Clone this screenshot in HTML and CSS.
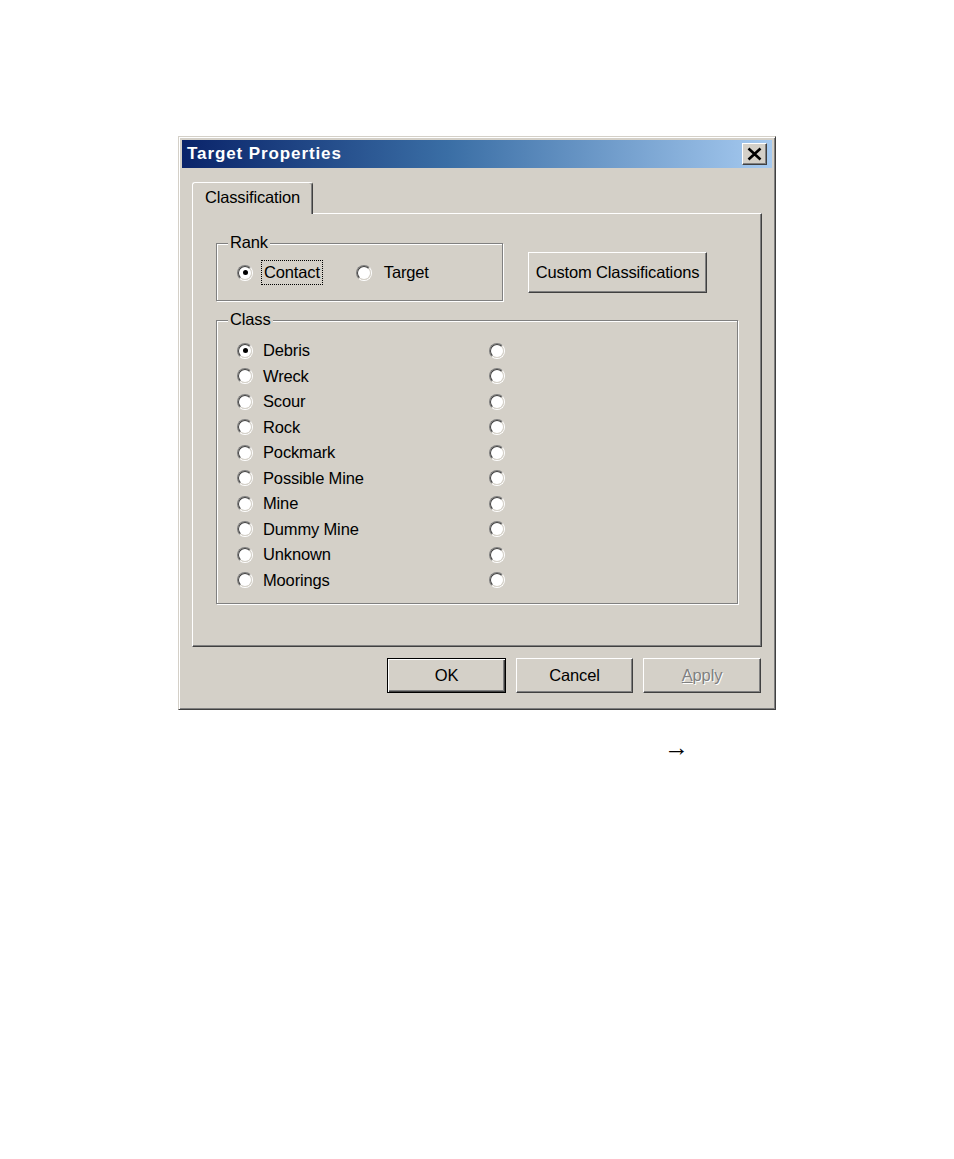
FILE: index.html
```html
<!DOCTYPE html>
<html>
<head>
<meta charset="utf-8">
<title>Target Properties</title>
<link rel="stylesheet" href="styles.css">
</head>
<body>
<div class="page">
  <div class="dialog">
    <div class="titlebar">
      <span class="title">Target Properties</span>
      <button class="close" aria-label="Close">
        <svg width="23" height="20" viewBox="0 0 23 20"><path d="M5.5 4.5 L17.5 15.5 M17.5 4.5 L5.5 15.5" stroke="#000" stroke-width="2.6" fill="none"/></svg>
      </button>
    </div>
    <div class="tabs"><div class="tab">Classification</div></div>
    <div class="panel">
      <div class="top-row">
        <div class="group rank">
          <span class="group-label">Rank</span>
          <div class="rank-options">
            <label class="opt"><span class="radio checked"></span><span class="text focus">Contact</span></label>
            <label class="opt target"><span class="radio"></span><span class="text">Target</span></label>
          </div>
        </div>
        <button class="btn custom">Custom Classifications</button>
      </div>
      <div class="group klass">
        <span class="group-label">Class</span>
        <div class="class-grid">
          <label class="opt"><span class="radio checked"></span><span class="text">Debris</span></label>
          <label class="opt"><span class="radio"></span><span class="text">Wreck</span></label>
          <label class="opt"><span class="radio"></span><span class="text">Scour</span></label>
          <label class="opt"><span class="radio"></span><span class="text">Rock</span></label>
          <label class="opt"><span class="radio"></span><span class="text">Pockmark</span></label>
          <label class="opt"><span class="radio"></span><span class="text">Possible Mine</span></label>
          <label class="opt"><span class="radio"></span><span class="text">Mine</span></label>
          <label class="opt"><span class="radio"></span><span class="text">Dummy Mine</span></label>
          <label class="opt"><span class="radio"></span><span class="text">Unknown</span></label>
          <label class="opt"><span class="radio"></span><span class="text">Moorings</span></label>
          <label class="opt"><span class="radio"></span></label>
          <label class="opt"><span class="radio"></span></label>
          <label class="opt"><span class="radio"></span></label>
          <label class="opt"><span class="radio"></span></label>
          <label class="opt"><span class="radio"></span></label>
          <label class="opt"><span class="radio"></span></label>
          <label class="opt"><span class="radio"></span></label>
          <label class="opt"><span class="radio"></span></label>
          <label class="opt"><span class="radio"></span></label>
          <label class="opt"><span class="radio"></span></label>
        </div>
      </div>
    </div>
    <div class="actions">
      <button class="btn default ok">OK</button>
      <button class="btn cancel">Cancel</button>
      <button class="btn disabled apply"><u>A</u>pply</button>
    </div>
  </div>
  <div class="arrow-line">&rarr;</div>
</div>
</body>
</html>
```
FILE: styles.css
```css
html, body {
  margin: 0;
  padding: 0;
  background: #ffffff;
}

body, button {
  font-family: "Liberation Sans", Arial, sans-serif;
  font-size: 16.5px;
  letter-spacing: -0.15px;
  color: #000;
}

.page {
  padding: 136px 0 0 178px;
}

.dialog {
  width: 598px;
  height: 574px;
  box-sizing: border-box;
  background: #d4d0c8;
  border: 1px solid;
  border-color: #d4d0c8 #404040 #404040 #d4d0c8;
  box-shadow: inset 1px 1px 0 #ffffff, inset -1px -1px 0 #808080;
  padding: 3px;
}

.titlebar {
  height: 28px;
  display: flex;
  align-items: center;
  justify-content: space-between;
  padding: 0 5px;
  background: linear-gradient(to right, #0a246a 0%, #3a6ea5 45%, #a6caf0 100%);
}

.title {
  color: #ffffff;
  font-weight: bold;
  font-size: 17px;
  letter-spacing: 0.9px;
  line-height: 20px;
}

.close {
  width: 25px;
  height: 22px;
  padding: 0;
  box-sizing: border-box;
  background: #d4d0c8;
  border: 1px solid;
  border-color: #ffffff #404040 #404040 #ffffff;
  box-shadow: inset -1px -1px 0 #808080;
  display: flex;
  align-items: center;
  justify-content: center;
}

.close svg {
  display: block;
}

.tabs {
  display: flex;
  margin-top: 14px;
  padding-left: 10px;
}

.tab {
  position: relative;
  z-index: 1;
  width: 121px;
  height: 32px;
  box-sizing: border-box;
  margin-bottom: -1px;
  background: #d4d0c8;
  border-top: 1px solid #ffffff;
  border-left: 1px solid #ffffff;
  border-right: 1px solid #404040;
  border-radius: 3px 3px 0 0;
  box-shadow: inset -1px 0 0 #808080;
  display: flex;
  align-items: center;
  justify-content: center;
  padding-bottom: 2px;
  line-height: 19px;
}

.panel {
  margin: 0 10px;
  height: 434px;
  box-sizing: border-box;
  border: 1px solid;
  border-color: #ffffff #404040 #404040 #ffffff;
  box-shadow: inset -1px -1px 0 #808080;
  padding: 29px 0 0 23px;
}

.top-row {
  display: flex;
  align-items: flex-start;
}

.group {
  position: relative;
  box-sizing: border-box;
  border: 1px solid #808080;
  box-shadow: inset 1px 1px 0 #ffffff, 1px 1px 0 #ffffff;
}

.group-label {
  position: absolute;
  top: -11px;
  left: 11px;
  padding: 0 2px;
  background: #d4d0c8;
  line-height: 19px;
}

.rank {
  width: 287px;
  height: 58px;
  padding: 15px 0 0 20px;
}

.rank-options {
  display: flex;
  align-items: center;
  height: 27px;
}

.opt {
  display: flex;
  align-items: center;
  height: 100%;
}

.radio {
  position: relative;
  flex: none;
  width: 16px;
  height: 16px;
  box-sizing: border-box;
  border-radius: 50%;
  border: 1px solid;
  border-color: #808080 #ffffff #ffffff #808080;
}

.radio::before {
  content: "";
  position: absolute;
  inset: 0;
  box-sizing: border-box;
  border-radius: 50%;
  border: 1px solid;
  border-color: #404040 #d4d0c8 #d4d0c8 #404040;
  background: #ffffff;
}

.radio.checked::after {
  content: "";
  position: absolute;
  left: 4.5px;
  top: 4.5px;
  width: 5px;
  height: 5px;
  border-radius: 50%;
  background: #000;
}

.text {
  margin-left: 7px;
  padding: 2px 2px;
  border: 1px dotted transparent;
  line-height: 19px;
}

.text.focus {
  margin-left: 8px;
  border-color: #000;
}

.opt.target {
  margin-left: 33px;
}

.opt.target .text {
  margin-left: 9px;
}

.btn {
  box-sizing: border-box;
  background: #d4d0c8;
  border: 1px solid;
  border-color: #ffffff #404040 #404040 #ffffff;
  box-shadow: inset -1px -1px 0 #808080;
  padding: 0;
  line-height: 19px;
  text-align: center;
}

.custom {
  width: 179px;
  height: 41px;
  margin: 9px 0 0 25px;
}

.klass {
  width: 522px;
  height: 284px;
  margin-top: 19px;
  padding: 17px 0 0 20px;
}

.class-grid {
  display: grid;
  grid-template-columns: 252px auto;
  grid-template-rows: repeat(10, 25.5px);
  grid-auto-flow: column;
}

.actions {
  display: flex;
  justify-content: flex-end;
  gap: 10px;
  margin-top: 11px;
  padding-right: 11px;
}

.actions .btn {
  height: 35px;
}

.ok { width: 119px; }
.cancel { width: 117px; }
.apply { width: 118px; }

.btn.default {
  border: 1px solid #000;
  box-shadow: inset 1px 1px 0 #ffffff, inset -1px -1px 0 #404040, inset -2px -2px 0 #808080;
}

.btn.disabled {
  color: #808080;
  text-shadow: 1px 1px 0 #ffffff;
}

.arrow-line {
  margin-top: 26px;
  padding-left: 486px;
  line-height: 24px;
  font-family: "Liberation Serif", "Times New Roman", serif;
  font-size: 25px;
  letter-spacing: 0;
}
```
